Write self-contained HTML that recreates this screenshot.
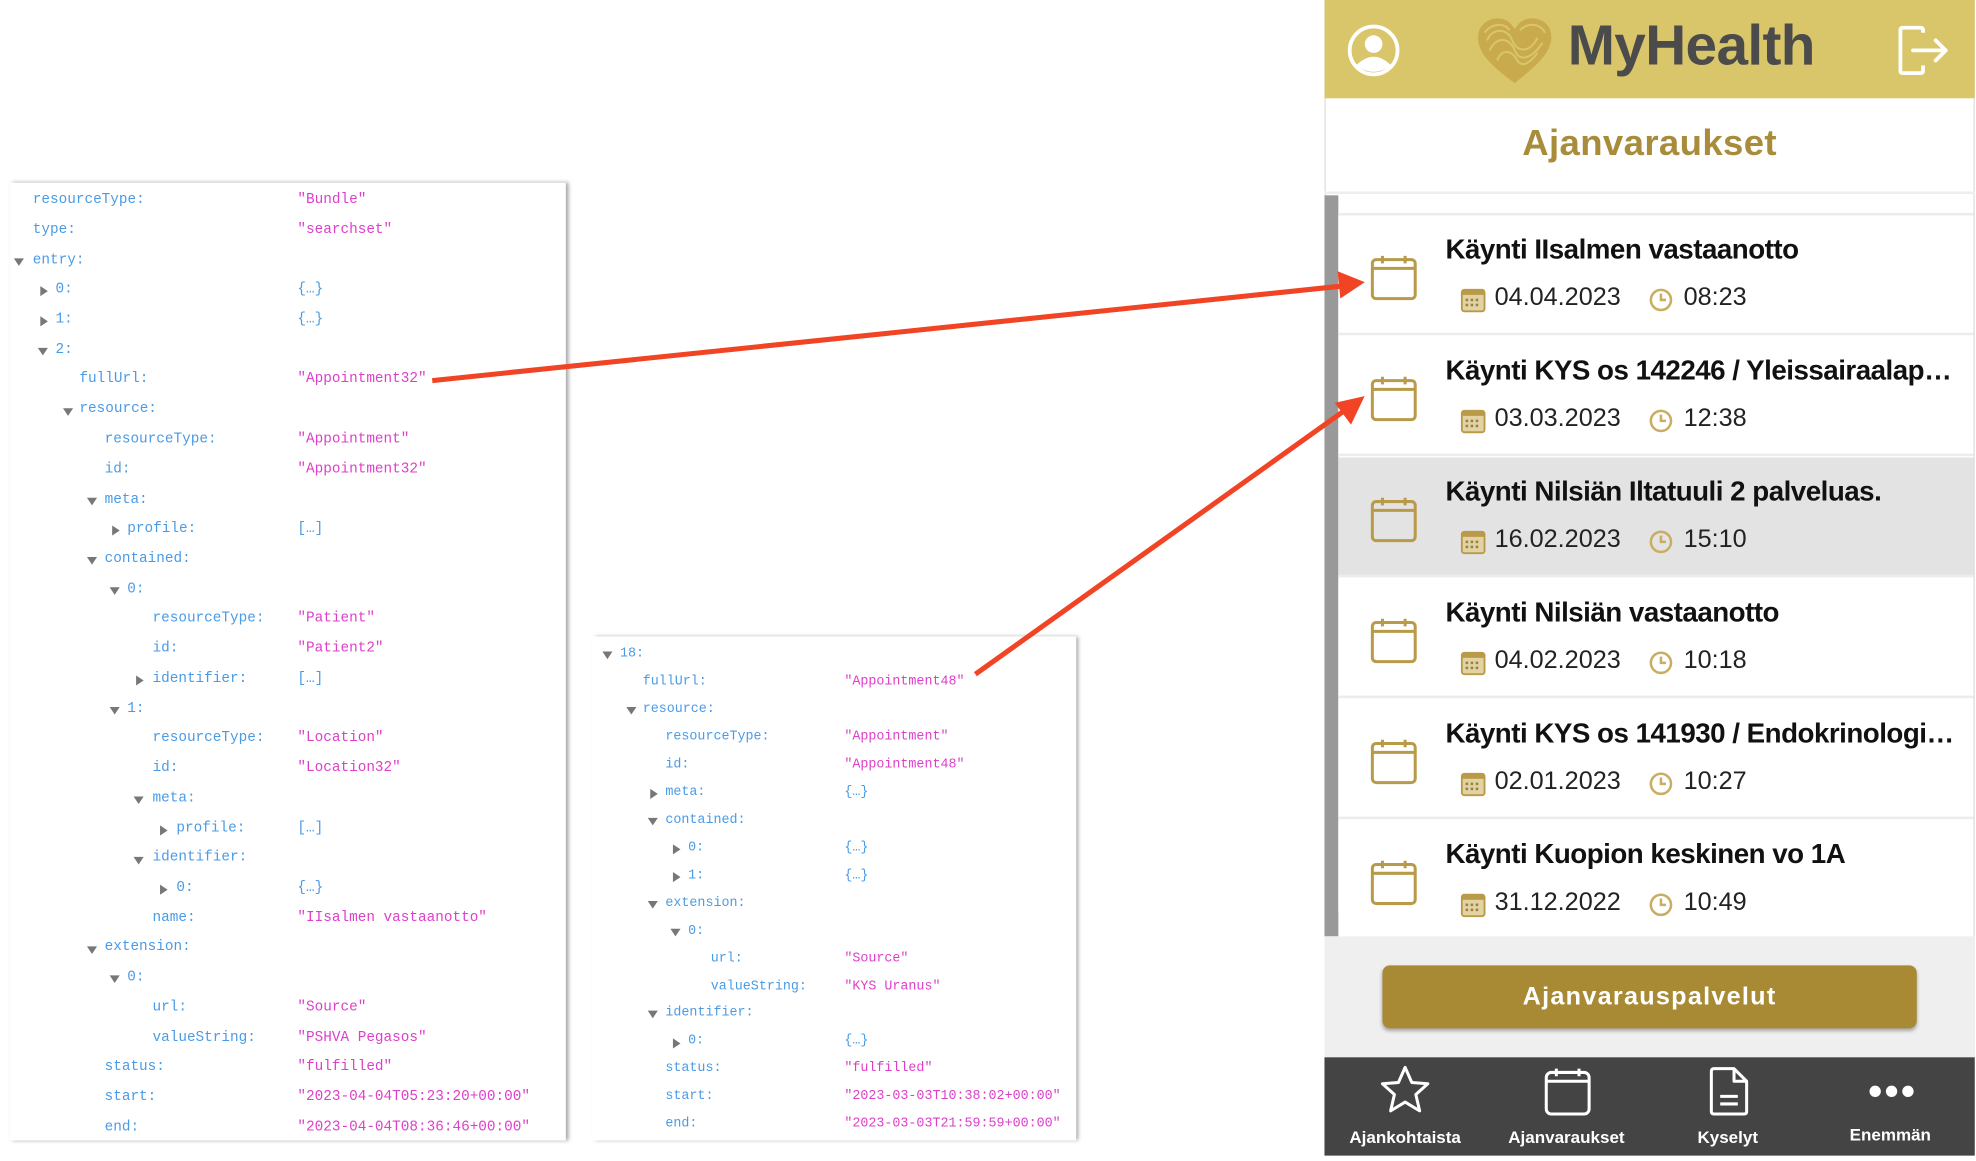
<!DOCTYPE html>
<html><head><meta charset="utf-8"><style>
*{margin:0;padding:0;box-sizing:border-box}
html,body{width:1976px;height:1160px;overflow:hidden;background:#fff}
#s{position:absolute;left:0;top:0;width:1568px;height:921px;transform:scale(1.2602);transform-origin:0 0}
.a{position:absolute;white-space:nowrap}
.j{font-family:"Liberation Mono",monospace;color:#4a9be6;font-size:11.4px;position:absolute;left:0;top:3px}
.j2{font-size:10.6px;top:2px}
.v{color:#de3fca}
.v.o{color:#4a9be6}
.tri{display:inline-block;width:0;height:0;position:absolute}
.td{border-left:4px solid transparent;border-right:4px solid transparent;border-top:6px solid #777}
.tr{border-top:4px solid transparent;border-bottom:4px solid transparent;border-left:6px solid #777}
.ph{font-family:"Liberation Sans",sans-serif}
.it{position:absolute;left:1062px;width:504px;height:95px;border-bottom:2px solid #ececec;background:#fff}
.it .t{position:absolute;left:85px;top:14px;width:410px;font-weight:bold;font-size:22px;letter-spacing:-0.4px;color:#111;overflow:hidden;text-overflow:ellipsis;white-space:nowrap;font-family:"Liberation Sans",sans-serif}
.it .d{position:absolute;left:124px;top:54px;font-size:20px;color:#222;font-family:"Liberation Sans",sans-serif}
.it .tm{position:absolute;left:274px;top:54px;font-size:20px;color:#222;font-family:"Liberation Sans",sans-serif}
.it svg{position:absolute}
.nl{position:absolute;top:895px;color:#fff;font-weight:bold;font-size:13.5px;font-family:"Liberation Sans",sans-serif;transform:translateX(-50%)}
</style></head><body><div id="s">

<div class="a" style="left:8px;top:145px;width:441px;height:760px;background:#fff;box-shadow:2px 0 3px rgba(0,0,0,.35)"></div>
<div class="a" style="left:470px;top:505px;width:384px;height:400px;background:#fff;box-shadow:2px 0 3px rgba(0,0,0,.35)"></div>

<div class="j">
<div class="a" style="left:26px;top:150px">resourceType:</div><div class="a v" style="left:236px;top:150px">"Bundle"</div>
<div class="a" style="left:26px;top:174px">type:</div><div class="a v" style="left:236px;top:174px">"searchset"</div>
<span class="tri td" style="left:11px;top:202px"></span><div class="a" style="left:26px;top:198px">entry:</div>
<span class="tri tr" style="left:32px;top:224px"></span><div class="a" style="left:44px;top:221px">0:</div><div class="a v o" style="left:236px;top:221px">{…}</div>
<span class="tri tr" style="left:32px;top:248px"></span><div class="a" style="left:44px;top:245px">1:</div><div class="a v o" style="left:236px;top:245px">{…}</div>
<span class="tri td" style="left:30px;top:273px"></span><div class="a" style="left:44px;top:269px">2:</div>
<div class="a" style="left:63px;top:292px">fullUrl:</div><div class="a v" style="left:236px;top:292px">"Appointment32"</div>
<span class="tri td" style="left:50px;top:321px"></span><div class="a" style="left:63px;top:316px">resource:</div>
<div class="a" style="left:83px;top:340px">resourceType:</div><div class="a v" style="left:236px;top:340px">"Appointment"</div>
<div class="a" style="left:83px;top:364px">id:</div><div class="a v" style="left:236px;top:364px">"Appointment32"</div>
<span class="tri td" style="left:69px;top:392px"></span><div class="a" style="left:83px;top:388px">meta:</div>
<span class="tri tr" style="left:89px;top:414px"></span><div class="a" style="left:101px;top:411px">profile:</div><div class="a v o" style="left:236px;top:411px">[…]</div>
<span class="tri td" style="left:69px;top:439px"></span><div class="a" style="left:83px;top:435px">contained:</div>
<span class="tri td" style="left:87px;top:463px"></span><div class="a" style="left:101px;top:459px">0:</div>
<div class="a" style="left:121px;top:482px">resourceType:</div><div class="a v" style="left:236px;top:482px">"Patient"</div>
<div class="a" style="left:121px;top:506px">id:</div><div class="a v" style="left:236px;top:506px">"Patient2"</div>
<span class="tri tr" style="left:108px;top:533px"></span><div class="a" style="left:121px;top:530px">identifier:</div><div class="a v o" style="left:236px;top:530px">[…]</div>
<span class="tri td" style="left:87px;top:558px"></span><div class="a" style="left:101px;top:554px">1:</div>
<div class="a" style="left:121px;top:577px">resourceType:</div><div class="a v" style="left:236px;top:577px">"Location"</div>
<div class="a" style="left:121px;top:601px">id:</div><div class="a v" style="left:236px;top:601px">"Location32"</div>
<span class="tri td" style="left:106px;top:629px"></span><div class="a" style="left:121px;top:625px">meta:</div>
<span class="tri tr" style="left:127px;top:652px"></span><div class="a" style="left:140px;top:649px">profile:</div><div class="a v o" style="left:236px;top:649px">[…]</div>
<span class="tri td" style="left:106px;top:677px"></span><div class="a" style="left:121px;top:672px">identifier:</div>
<span class="tri tr" style="left:127px;top:699px"></span><div class="a" style="left:140px;top:696px">0:</div><div class="a v o" style="left:236px;top:696px">{…}</div>
<div class="a" style="left:121px;top:720px">name:</div><div class="a v" style="left:236px;top:720px">"IIsalmen vastaanotto"</div>
<span class="tri td" style="left:69px;top:748px"></span><div class="a" style="left:83px;top:743px">extension:</div>
<span class="tri td" style="left:87px;top:771px"></span><div class="a" style="left:101px;top:767px">0:</div>
<div class="a" style="left:121px;top:791px">url:</div><div class="a v" style="left:236px;top:791px">"Source"</div>
<div class="a" style="left:121px;top:815px">valueString:</div><div class="a v" style="left:236px;top:815px">"PSHVA Pegasos"</div>
<div class="a" style="left:83px;top:838px">status:</div><div class="a v" style="left:236px;top:838px">"fulfilled"</div>
<div class="a" style="left:83px;top:862px">start:</div><div class="a v" style="left:236px;top:862px">"2023-04-04T05:23:20+00:00"</div>
<div class="a" style="left:83px;top:886px">end:</div><div class="a v" style="left:236px;top:886px">"2023-04-04T08:36:46+00:00"</div>
</div>

<div class="j j2">
<span class="tri td" style="left:478px;top:515px"></span><div class="a" style="left:492px;top:511px">18:</div>
<div class="a" style="left:510px;top:533px">fullUrl:</div><div class="a v" style="left:670px;top:533px">"Appointment48"</div>
<span class="tri td" style="left:497px;top:559px"></span><div class="a" style="left:510px;top:555px">resource:</div>
<div class="a" style="left:528px;top:577px">resourceType:</div><div class="a v" style="left:670px;top:577px">"Appointment"</div>
<div class="a" style="left:528px;top:599px">id:</div><div class="a v" style="left:670px;top:599px">"Appointment48"</div>
<span class="tri tr" style="left:516px;top:624px"></span><div class="a" style="left:528px;top:621px">meta:</div><div class="a v o" style="left:670px;top:621px">{…}</div>
<span class="tri td" style="left:514px;top:647px"></span><div class="a" style="left:528px;top:643px">contained:</div>
<span class="tri tr" style="left:534px;top:668px"></span><div class="a" style="left:546px;top:665px">0:</div><div class="a v o" style="left:670px;top:665px">{…}</div>
<span class="tri tr" style="left:534px;top:690px"></span><div class="a" style="left:546px;top:687px">1:</div><div class="a v o" style="left:670px;top:687px">{…}</div>
<span class="tri td" style="left:514px;top:713px"></span><div class="a" style="left:528px;top:709px">extension:</div>
<span class="tri td" style="left:532px;top:735px"></span><div class="a" style="left:546px;top:731px">0:</div>
<div class="a" style="left:564px;top:753px">url:</div><div class="a v" style="left:670px;top:753px">"Source"</div>
<div class="a" style="left:564px;top:775px">valueString:</div><div class="a v" style="left:670px;top:775px">"KYS Uranus"</div>
<span class="tri td" style="left:514px;top:800px"></span><div class="a" style="left:528px;top:796px">identifier:</div>
<span class="tri tr" style="left:534px;top:822px"></span><div class="a" style="left:546px;top:818px">0:</div><div class="a v o" style="left:670px;top:818px">{…}</div>
<div class="a" style="left:528px;top:840px">status:</div><div class="a v" style="left:670px;top:840px">"fulfilled"</div>
<div class="a" style="left:528px;top:862px">start:</div><div class="a v" style="left:670px;top:862px">"2023-03-03T10:38:02+00:00"</div>
<div class="a" style="left:528px;top:884px">end:</div><div class="a v" style="left:670px;top:884px">"2023-03-03T21:59:59+00:00"</div>
</div>

<div class="a" style="left:1051px;top:0;width:516px;height:917px;background:#fff;border:1px solid #ddd"></div>
<div class="a" style="left:1051px;top:0;width:516px;height:78px;background:#d9c56a"></div>
<svg class="a" style="left:1068px;top:18px" width="44" height="44" viewBox="0 0 44 44"><circle cx="22" cy="22" r="19" fill="none" stroke="#fff" stroke-width="3"/><circle cx="22" cy="17" r="7" fill="#fff"/><path d="M8 34 Q22 20 36 34 Q22 44 8 34Z" fill="#fff"/></svg>
<svg class="a" style="left:1170px;top:12px" width="64" height="56" viewBox="0 0 64 56"><path d="M32 54 C10 38 2 28 3 16 C4 6 14 1 22 3 C27 4 30 8 32 11 C34 8 37 4 42 3 C52 1 61 7 61 17 C61 29 52 38 32 54Z" fill="#c9ab4e"/><g fill="none" stroke="#d9c56a" stroke-width="1.6"><path d="M10 20 C14 10 26 10 30 20 C34 30 44 30 50 18"/><path d="M12 28 C18 16 28 18 32 28 C36 38 46 34 54 22"/><path d="M18 36 C22 26 30 28 34 36 C38 42 44 38 50 30"/><path d="M8 14 C14 6 24 6 28 12"/><path d="M36 12 C42 6 52 6 56 14"/></g></svg>
<div class="a" style="left:1244px;top:10px;font-family:'Liberation Sans',sans-serif;font-weight:bold;font-size:45px;letter-spacing:-0.5px;color:#4b4b4b">MyHealth</div>
<svg class="a" style="left:1504px;top:20px" width="44" height="40" viewBox="0 0 44 40"><path d="M22 6 V4 Q22 2 20 2 H6 Q4 2 4 4 V36 Q4 38 6 38 H20 Q22 38 22 36 V32" fill="none" stroke="#fff" stroke-width="3"/><path d="M14 20 H40 M32 12 L40 20 L32 28" fill="none" stroke="#fff" stroke-width="3" stroke-linecap="round" stroke-linejoin="round"/></svg>
<div class="a ph" style="left:1051px;width:516px;text-align:center;top:98px;font-size:29px;font-weight:bold;color:#a88c3a;letter-spacing:0.3px">Ajanvaraukset</div>
<div class="a" style="left:1051px;top:152px;width:516px;height:2px;background:#eee"></div>
<div class="a" style="left:1051px;top:155px;width:11px;height:588px;background:#999"></div>
<div class="a" style="left:1062px;top:169px;width:504px;height:2px;background:#ececec"></div>

<div id="items"></div>
<div class="a" style="left:1051px;top:743px;width:516px;height:96px;background:#efefef"></div>
<div class="a ph" style="left:1097px;top:766px;width:424px;height:50px;background:#a88a34;border-radius:6px;box-shadow:0 2px 3px rgba(0,0,0,.3);color:#fff;font-weight:bold;font-size:20px;letter-spacing:1px;text-align:center;line-height:50px">Ajanvarauspalvelut</div>
<div class="a" style="left:1051px;top:839px;width:516px;height:78px;background:#444"></div>
<svg class="a" style="left:1094px;top:844px" width="42" height="42" viewBox="0 0 42 42"><path d="M21 3 L26.3 15 L39 16 L29.5 24.5 L32.5 37.5 L21 30.5 L9.5 37.5 L12.5 24.5 L3 16 L15.7 15Z" fill="none" stroke="#fff" stroke-width="2.4" stroke-linejoin="round"/></svg>
<svg class="a" style="left:1225px;top:846px" width="38" height="40" viewBox="0 0 38 40"><rect x="2" y="5" width="34" height="33" rx="4" fill="none" stroke="#fff" stroke-width="2.4"/><path d="M2 12 H36 M10 2 V8 M28 2 V8" stroke="#fff" stroke-width="2.4"/></svg>
<svg class="a" style="left:1356px;top:846px" width="32" height="40" viewBox="0 0 32 40"><path d="M4 2 H20 L30 12 V36 Q30 38 28 38 H4 Q2 38 2 36 V4 Q2 2 4 2Z M20 2 V12 H30 M9 24 H23 M9 30 H23" fill="none" stroke="#fff" stroke-width="2.4" stroke-linejoin="round"/></svg>
<svg class="a" style="left:1482px;top:860px" width="38" height="12"><circle cx="6" cy="6" r="4.5" fill="#fff"/><circle cx="19" cy="6" r="4.5" fill="#fff"/><circle cx="32" cy="6" r="4.5" fill="#fff"/></svg>
<div class="nl" style="left:1115px">Ajankohtaista</div>
<div class="nl" style="left:1243px">Ajanvaraukset</div>
<div class="nl" style="left:1371px">Kyselyt</div>
<div class="nl" style="left:1500px;top:893px">Enemmän</div>

<svg class="a" style="left:0;top:0" width="1568" height="921"><g stroke="#f04424" stroke-width="4" fill="#f04424"><line x1="343" y1="302" x2="1065" y2="227"/><path d="M1082 224 L1062 216 L1064 236Z" stroke-width="1"/><line x1="774" y1="535" x2="1068" y2="325"/><path d="M1082 315 L1060 320 L1072 336Z" stroke-width="1"/></g></svg>

<script>
var data=[["Käynti IIsalmen vastaanotto","04.04.2023","08:23"],["Käynti KYS os 142246 / Yleissairaalapsykiatria","03.03.2023","12:38"],["Käynti Nilsiän Iltatuuli 2 palveluas.","16.02.2023","15:10"],["Käynti Nilsiän vastaanotto","04.02.2023","10:18"],["Käynti KYS os 141930 / Endokrinologian pkl","02.01.2023","10:27"],["Käynti Kuopion keskinen vo 1A","31.12.2022","10:49"]];
var h="";
data.forEach(function(d,i){var top=171+i*96;
h+='<div class="it" style="top:'+top+'px;'+(i==2?'background:#e3e3e3;':'')+(i==5?'border-bottom:none;height:72px;':'')+'">'+
'<svg style="left:25px;top:30px" width="38" height="38" viewBox="0 0 38 38"><rect x="2" y="5" width="34" height="31" rx="3" fill="none" stroke="#b89a48" stroke-width="2.4"/><path d="M2 12 H36 M10 2 V8 M28 2 V8" stroke="#b89a48" stroke-width="2.4"/></svg>'+
'<div class="t">'+d[0]+'</div>'+
'<svg style="left:97px;top:57px" width="20" height="20" viewBox="0 0 20 20"><rect x="1" y="2" width="18" height="17" rx="2" fill="#e2d3a4" stroke="#b89a48" stroke-width="1.5"/><rect x="1" y="2" width="18" height="4" fill="#b89a48"/><g fill="#9a8040"><rect x="4" y="9" width="2" height="2"/><rect x="8" y="9" width="2" height="2"/><rect x="12" y="9" width="2" height="2"/><rect x="4" y="13" width="2" height="2"/><rect x="8" y="13" width="2" height="2"/><rect x="12" y="13" width="2" height="2"/></g></svg>'+
'<div class="d">'+d[1]+'</div>'+
'<svg style="left:246px;top:57px" width="20" height="20" viewBox="0 0 20 20"><circle cx="10" cy="10" r="8" fill="none" stroke="#c8ad62" stroke-width="2"/><path d="M10 5 V10 H14" fill="none" stroke="#c8ad62" stroke-width="2"/></svg>'+
'<div class="tm">'+d[2]+'</div></div>';});
document.getElementById("items").innerHTML=h;
</script>
</div></body></html>
